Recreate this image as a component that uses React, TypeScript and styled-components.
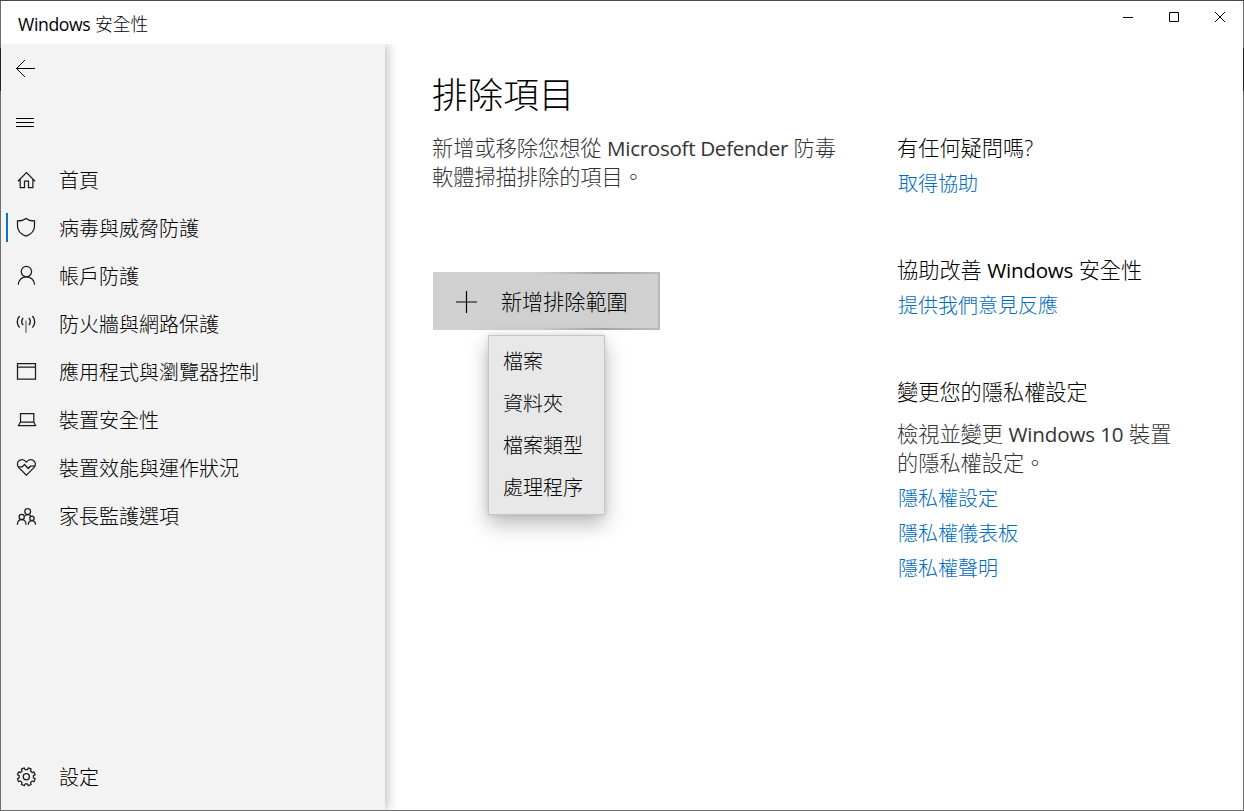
import React from "react";
import styled, { createGlobalStyle } from "styled-components";

const GlobalStyle = createGlobalStyle`
  *, *::before, *::after { box-sizing: border-box; }
  html, body { margin: 0; padding: 0; }
  body {
    font-family: "Open Sans", "Noto Sans CJK TC", sans-serif;
    font-weight: 300;
    color: #000;
    overflow: hidden;
  }
`;

const WindowFrame = styled.div`
  width: 1244px;
  height: 811px;
  padding: 1px;
  background:
    linear-gradient(#4a484a, #4a484a) 0 0 / 100% 1px no-repeat,
    linear-gradient(#242224, #242224) 0 48px / 1px 43px no-repeat,
    linear-gradient(#242224, #242224) 100% 48px / 1px 43px no-repeat,
    #6e6c6e;
`;

const WindowBody = styled.div`
  height: 100%;
  display: flex;
  flex-direction: column;
  background: #fff;
`;

const TitleBar = styled.header`
  flex: none;
  height: 43px;
  display: flex;
  justify-content: space-between;
`;

const WindowTitle = styled.div`
  padding: 3px 0 0 17px;
  font-size: 17.8px;
  line-height: 40px;
  white-space: nowrap;
`;

const Latin = styled.span<{ $size: number; $spacing?: number }>`
  font-family: "Open Sans", sans-serif;
  font-weight: 400;
  font-size: ${(p) => p.$size}px;
  line-height: 1;
  letter-spacing: ${(p) => p.$spacing ?? 0}px;
`;

const WindowControls = styled.div`
  display: flex;
`;

const ControlButton = styled.button`
  width: 46px;
  height: 32px;
  padding: 0;
  border: 0;
  background: none;
  display: block;

  svg { display: block; }
`;

const Columns = styled.div`
  flex: 1;
  display: flex;
  min-height: 0;
`;

const Sidebar = styled.nav`
  width: 384px;
  flex: none;
  display: flex;
  flex-direction: column;
  background: #f3f3f3;
  box-shadow: 3px 0 10px rgba(0, 0, 0, 0.24);
  clip-path: inset(0 -30px 0 0);
`;

const IconButton = styled.button`
  width: 48px;
  height: 54px;
  padding: 0;
  border: 0;
  background: none;
  display: block;

  svg { display: block; }
`;

const NavList = styled.ul`
  list-style: none;
  margin: 4px 0 0;
  padding: 0;
`;

const NavItem = styled.li`
  height: 48px;
  display: flex;
  align-items: center;
`;

const NavLabel = styled.span`
  padding-top: 2px;
  font-size: 20px;
  line-height: 28px;
  white-space: nowrap;
`;

const NavMarker = styled.span<{ $active: boolean }>`
  width: 2px;
  height: 29px;
  align-self: flex-start;
  margin: 9px 6px 0 5px;
  background: ${(p) => (p.$active ? "#0a72c4" : "transparent")};
`;

const NavIcon = styled.svg`
  width: 24px;
  height: 24px;
  flex: none;
  margin-right: 21px;
  fill: none;
  stroke: #1c1c1c;
  stroke-width: 1.25;
`;

const NavFooter = styled(NavList)`
  margin: auto 0 9px;
`;

const Main = styled.main`
  flex: 1;
  display: flex;
  padding-left: 47px;
`;

const Content = styled.section`
  width: 465px;
  flex: none;
  padding-top: 25px;
`;

const PageTitle = styled.h1`
  margin: 0;
  font-size: 35.6px;
  font-weight: 300;
  line-height: 50px;
`;

const Paragraph = styled.p`
  margin: 0;
  font-size: 21.2px;
  line-height: 29px;
  color: #333;
  white-space: nowrap;
`;

const Description = styled(Paragraph)`
  margin-top: 14px;
`;

const AddArea = styled.div`
  position: relative;
  width: 227px;
  margin: 81px 0 0 1px;
`;

const AddButton = styled.button`
  width: 227px;
  height: 58px;
  padding: 2px 0 0 22px;
  display: flex;
  align-items: center;
  gap: 24px;
  border: 0;
  background:
    linear-gradient(90deg, #d0d0d0 45%, #a6a6a6 75%, #bcbcbc) 0 0 / 100% 2px no-repeat,
    linear-gradient(90deg, #d0d0d0 45%, #a6a6a6 75%, #bcbcbc) 0 100% / 100% 2px no-repeat,
    linear-gradient(#b8b8b8, #b8b8b8) 100% 0 / 2px 100% no-repeat,
    #d0d0d0;
  font: inherit;
  font-size: 21.1px;
  line-height: 30px;
  color: #000;
  white-space: nowrap;
`;

const Menu = styled.ul`
  position: absolute;
  top: 63px;
  left: 55px;
  width: 117px;
  height: 180px;
  margin: 0;
  padding: 5px 0;
  list-style: none;
  background: #e8e8e8;
  border: 1px solid #c6c6c6;
  box-shadow: 0 9px 20px rgba(0, 0, 0, 0.28), 0 0 5px rgba(0, 0, 0, 0.1);
`;

const MenuItem = styled.li`
  height: 42px;
  padding-left: 14px;
  font-size: 20px;
  line-height: 42px;
  white-space: nowrap;
`;

const Aside = styled.aside`
  padding-top: 89px;
`;

const HelpSection = styled.section`
  margin-bottom: 54px;
`;

const HelpTitle = styled.h2`
  margin: 0;
  padding-bottom: 3px;
  font-size: 21.2px;
  font-weight: 300;
  line-height: 30px;
  white-space: nowrap;
`;

const HelpText = styled(Paragraph)`
  margin: 9px 0 4px;
`;

const HelpLink = styled.a`
  display: block;
  padding: 4px 0 3px 1px;
  font-size: 20px;
  line-height: 28px;
  color: #006cbe;
  text-decoration: none;
  white-space: nowrap;
`;

const gearPath = (() => {
  const parts: string[] = [];
  const teeth = 8;
  const step = (Math.PI * 2) / teeth;
  const point = (angle: number, radius: number) =>
    `${(12.3 + Math.cos(angle) * radius).toFixed(2)} ${(11.8 + Math.sin(angle) * radius).toFixed(2)}`;
  for (let i = 0; i < teeth; i++) {
    const a = i * step + step / 2;
    parts.push(`${i === 0 ? "M" : "L"}${point(a - step * 0.22, 9.1)}`);
    parts.push(`L${point(a + step * 0.22, 9.1)}`);
    parts.push(`L${point(a + step * 0.3, 7.2)}`);
    parts.push(`L${point(a + step * 0.7, 7.2)}`);
  }
  return parts.join("") + "Z";
})();

const icons: Record<string, React.ReactNode> = {
  home: <path d="M3.9 13.2 12.5 4.6l8.6 8.6M6.2 11.2v8.3h4.3v-6.3h4v6.3h4.4v-8.3" />,
  shield: (
    <path d="M12 2.500C10 4.100 6.500 4.900 3.500 4.900V10C3.500 15 7.500 18.500 12 20.100C16.500 18.500 20.500 15 20.500 10V4.900C17.500 4.900 14 4.100 12 2.500Z" />
  ),
  person: (
    <>
      <circle cx="12.400" cy="7.600" r="5.200" />
      <path d="M4.200 20.800C4.400 16 8 12.800 12.400 12.800s8 3.200 8.200 8" />
    </>
  ),
  antenna: (
    <>
      <path d="M12 8.500v12.200" stroke="#666" />
      <path
        strokeWidth="1.400"
        d="M9.200 6.100a4.800 4.800 0 0 0 0 7M14.800 6.100a4.800 4.800 0 0 1 0 7M5.600 4a8.400 8.400 0 0 0 0 11.600M18.400 4a8.400 8.400 0 0 1 0 11.600"
      />
    </>
  ),
  app: <path d="M3.500 3.500h18v15.500h-18zM3.500 7h18" />,
  laptop: <path d="M6.500 5.700h13.300v8.300H6.500zM6.500 14 4.500 17.500h17l-1.700-3.500" />,
  heart: (
    <>
      <path d="M12.400 19.200 4.800 11.600C2.600 9.200 3.200 6 5.300 4.600c2.300-1.500 5.200-.9 7.100 1.500 1.900-2.400 4.800-3 7.100-1.500 2.100 1.400 2.700 4.600.5 7z" />
      <path d="M4.500 10.900h3.700l2.300-2.400 3.700 4 2.200-2.300h4.600" />
    </>
  ),
  family: (
    <>
      <circle cx="13.700" cy="7.600" r="2.900" />
      <circle cx="7.700" cy="12.900" r="2.600" />
      <circle cx="18" cy="14.300" r="2.200" />
      <path d="M3.400 20.800c0-3 1.700-5.100 4.300-5.100s4.300 2.100 4.300 5.100M14.300 20.800c0-2.500 1.400-4.200 3.600-4.200s3.600 1.700 3.600 4.200M10.700 11.800c.8-.9 1.800-1.300 3-1.300s2.400.6 3.100 1.700" />
    </>
  ),
  gear: (
    <>
      <path d={gearPath} strokeLinejoin="round" />
      <circle cx="12.300" cy="11.800" r="3.100" />
    </>
  ),
};

const navItems = [
  { icon: "home", label: "首頁" },
  { icon: "shield", label: "病毒與威脅防護", active: true },
  { icon: "person", label: "帳戶防護" },
  { icon: "antenna", label: "防火牆與網路保護" },
  { icon: "app", label: "應用程式與瀏覽器控制" },
  { icon: "laptop", label: "裝置安全性" },
  { icon: "heart", label: "裝置效能與運作狀況" },
  { icon: "family", label: "家長監護選項" },
];

const menuItems = ["檔案", "資料夾", "檔案類型", "處理程序"];

function NavEntry({ icon, label, active = false }: { icon: string; label: string; active?: boolean }) {
  return (
    <NavItem>
      <NavMarker $active={active} />
      <NavIcon viewBox="0 0 24 24">{icons[icon]}</NavIcon>
      <NavLabel>{label}</NavLabel>
    </NavItem>
  );
}

export default function App() {
  return (
    <>
      <GlobalStyle />
      <WindowFrame>
        <WindowBody>
          <TitleBar>
            <WindowTitle>
              <Latin $size={17.6} $spacing={-0.35}>Windows</Latin> 安全性
            </WindowTitle>
            <WindowControls>
              <ControlButton aria-label="最小化">
                <svg width="46" height="32" stroke="#000" fill="none">
                  <path d="M18 16.500h10" />
                </svg>
              </ControlButton>
              <ControlButton aria-label="最大化">
                <svg width="46" height="32" stroke="#000" fill="none">
                  <path d="M18.500 11.500h9v9h-9z" />
                </svg>
              </ControlButton>
              <ControlButton aria-label="關閉">
                <svg width="46" height="32" stroke="#000" fill="none">
                  <path d="M18 11l10 10M28 11 18 21" />
                </svg>
              </ControlButton>
            </WindowControls>
          </TitleBar>
          <Columns>
            <Sidebar>
              <IconButton aria-label="返回">
                <svg width="48" height="54" stroke="#000" fill="none">
                  <path d="M15.500 24.500H34M24 16l-8.500 8.500L24 33" />
                </svg>
              </IconButton>
              <IconButton aria-label="選單">
                <svg width="48" height="54" stroke="#000" fill="none">
                  <path d="M15 20.500h18M15 24.500h18M15 28.500h18" />
                </svg>
              </IconButton>
              <NavList>
                {navItems.map((item) => (
                  <NavEntry key={item.icon} {...item} />
                ))}
              </NavList>
              <NavFooter>
                <NavEntry icon="gear" label="設定" />
              </NavFooter>
            </Sidebar>
            <Main>
              <Content>
                <PageTitle>排除項目</PageTitle>
                <Description>
                  新增或移除您想從 <Latin $size={20.6} $spacing={-0.3}>Microsoft Defender</Latin> 防毒
                  <br />
                  軟體掃描排除的項目。
                </Description>
                <AddArea>
                  <AddButton>
                    <svg width="22" height="22" stroke="#000" strokeWidth="1.200" fill="none">
                      <path d="M11.500 0v22M1 11H22" />
                    </svg>
                    新增排除範圍
                  </AddButton>
                  <Menu>
                    {menuItems.map((label) => (
                      <MenuItem key={label}>{label}</MenuItem>
                    ))}
                  </Menu>
                </AddArea>
              </Content>
              <Aside>
                <HelpSection>
                  <HelpTitle>有任何疑問嗎?</HelpTitle>
                  <HelpLink>取得協助</HelpLink>
                </HelpSection>
                <HelpSection>
                  <HelpTitle>
                    協助改善 <Latin $size={20.6} $spacing={-0.25}>Windows</Latin> 安全性
                  </HelpTitle>
                  <HelpLink>提供我們意見反應</HelpLink>
                </HelpSection>
                <HelpSection>
                  <HelpTitle>變更您的隱私權設定</HelpTitle>
                  <HelpText>
                    檢視並變更 <Latin $size={20.6} $spacing={-0.15}>Windows 10</Latin> 裝置
                    <br />
                    的隱私權設定。
                  </HelpText>
                  <HelpLink>隱私權設定</HelpLink>
                  <HelpLink>隱私權儀表板</HelpLink>
                  <HelpLink>隱私權聲明</HelpLink>
                </HelpSection>
              </Aside>
            </Main>
          </Columns>
        </WindowBody>
      </WindowFrame>
    </>
  );
}
